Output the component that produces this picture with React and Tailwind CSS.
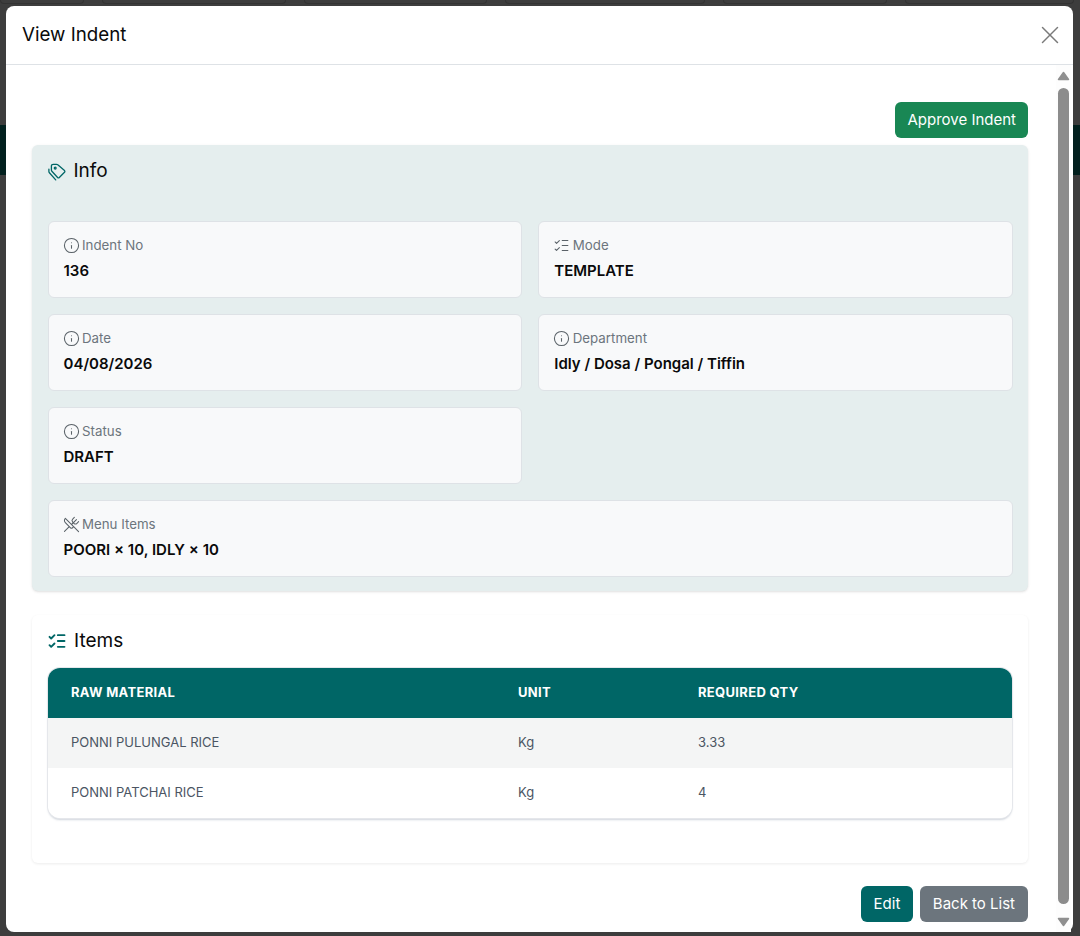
import React from 'react';
import { Info, ListChecks, UtensilsCrossed, X } from 'lucide-react';

const rows = [
  { name: 'PONNI PULUNGAL RICE', unit: 'Kg', qty: '3.33' },
  { name: 'PONNI PATCHAI RICE', unit: 'Kg', qty: '4' },
];

const tabs = ['w-[84px]', 'w-[184px]', 'w-[183px]', 'w-[200px]', 'w-[164px]', 'w-[169px]'];

function TagsIcon() {
  return (
    <svg width="18" height="18" viewBox="0 0 18 18" fill="none" stroke="#006666" strokeWidth="1.3" strokeLinecap="round" strokeLinejoin="round" className="mt-[2px] shrink-0">
      <path d="M5.200 1.300h3.300c.5 0 1 .2 1.300.5l6.700 5.800c.5.5.5 1.200 0 1.700l-5.200 5.200c-.5.5-1.200.5-1.700 0L3.900 8.200c-.3-.3-.5-.8-.5-1.300V3.100c0-1 .8-1.800 1.800-1.800z" />
      <path d="M.9 6.200v2.300c0 .5.2 1 .5 1.300l6.300 7.100" />
      <circle cx="7.200" cy="5.100" r=".9" />
    </svg>
  );
}

function Field({ icon: Icon, label, value, className = '' }) {
  return (
    <div className={`h-[77px] bg-[#f8f9fa] border border-[#dee2e6] rounded-md pt-[14px] px-[15px] ${className}`}>
      <div className="flex items-center gap-[2.5px] h-[18px] text-[13.3px] leading-[18px] text-[#6c757d]">
        <Icon size={17} strokeWidth={1.5} className="-ml-px text-[#5a6268]" />
        <span>{label}</span>
      </div>
      <div className="mt-[6px] text-[15px] leading-[22px] font-semibold text-[#0a0a0a]">{value}</div>
    </div>
  );
}

function App() {
  return (
    <div className="relative h-[936px] w-[1080px] overflow-hidden bg-[#3d3d3d] font-['Inter',sans-serif]">
      {/* page behind the backdrop */}
      <div className="flex h-[4px] gap-[18px]">
        {tabs.map((w, i) => (
          <div key={i} className={`${w} rounded-b-sm border border-t-0 border-[#333333]`}></div>
        ))}
      </div>
      <div className="mt-[121px] h-[50px] bg-[#02201e]"></div>

      <div className="absolute left-[6px] top-[6px] flex h-[926px] w-[1067px] flex-col rounded-lg bg-white">
        <div className="flex h-[59px] shrink-0 items-center justify-between border-b border-[#dee2e6] pl-4 pr-[8px]">
          <h1 className="text-[18.75px] font-normal text-[#0a0a0a]">View Indent</h1>
          <X size={30} strokeWidth={1.2} className="text-[#7a7a7a]" />
        </div>

        <div className="flex min-h-0 flex-1">
          <div className="min-w-0 flex-1 pl-[26px] pr-[28px]">
            <div className="mt-[37px] flex justify-end">
              <button className="h-9 rounded-md bg-[#198754] px-3 text-[15px] text-white">Approve Indent</button>
            </div>

            <section className="mt-[7px] rounded-md bg-[#e5eeee] pb-[14px] pl-[15.5px] pr-[15px] pt-4 shadow-sm">
              <div className="flex h-[43px] items-start gap-2">
                <TagsIcon />
                <h2 className="text-[19px] leading-[20px] text-[#0a0a0a]">Info</h2>
              </div>
              <div className="mt-[17px] grid grid-cols-2 gap-4">
                <Field icon={Info} label="Indent No" value="136" />
                <Field icon={ListChecks} label="Mode" value="TEMPLATE" />
                <Field icon={Info} label="Date" value="04/08/2026" />
                <Field icon={Info} label="Department" value="Idly / Dosa / Pongal / Tiffin" />
                <Field icon={Info} label="Status" value="DRAFT" />
                <div></div>
                <Field icon={UtensilsCrossed} label="Menu Items" value="POORI × 10, IDLY × 10" className="col-span-2" />
              </div>
            </section>

            <section className="mt-[24px] h-[248px] rounded-md bg-white px-4 pt-[13px] shadow-[0_1px_3px_rgba(0,0,0,0.08)]">
              <div className="flex h-[26px] items-center gap-[7px]">
                <ListChecks size={20} strokeWidth={2.25} className="-ml-px text-[#006666]" />
                <h2 className="text-[19px] text-[#0a0a0a]">Items</h2>
              </div>
              <div className="mt-[14px] overflow-hidden rounded-xl shadow-[0_0_0_1px_#e5e7eb,0_2px_2px_rgba(100,116,139,0.3)]">
                <table className="w-full table-fixed text-left">
                  <thead>
                    <tr className="h-[50px] bg-[#006666] text-[13px] font-bold tracking-wide text-white">
                      <th className="w-[470px] pl-[23px]">RAW MATERIAL</th>
                      <th className="w-[180px]">UNIT</th>
                      <th>REQUIRED QTY</th>
                    </tr>
                  </thead>
                  <tbody className="text-[13px] text-[#4b5563]">
                    {rows.map((row, i) => (
                      <tr key={row.name} className={`h-[50px] ${i === 0 ? 'bg-[#f4f5f5]' : 'bg-white'}`}>
                        <td className="pl-[23px]">{row.name}</td>
                        <td>{row.unit}</td>
                        <td>{row.qty}</td>
                      </tr>
                    ))}
                  </tbody>
                </table>
              </div>
            </section>

            <div className="mt-[23px] flex justify-end gap-[7px]">
              <button className="h-9 rounded-md bg-[#006666] px-[12.5px] text-[15px] text-white">Edit</button>
              <button className="h-9 rounded-md bg-[#6c757d] px-[13px] text-[15px] text-white">Back to List</button>
            </div>
          </div>

          {/* scrollbar */}
          <div className="mr-[2px] flex w-[15px] shrink-0 flex-col items-center bg-[#fdfdfd] pt-[6px]">
            <svg width="13" height="10" viewBox="0 0 13 10"><path d="M6.500 1.500 L11.500 8.500 H1.500 Z" fill="#8f8f8f" stroke="#8f8f8f" strokeWidth="1.500" strokeLinejoin="round" /></svg>
            <div className="mt-[7px] h-[816px] w-[11px] rounded-md bg-[#8c8c8c]"></div>
            <svg className="mt-[13px]" width="13" height="10" viewBox="0 0 13 10"><path d="M6.500 8.500 L11.500 1.500 H1.500 Z" fill="#8f8f8f" stroke="#8f8f8f" strokeWidth="1.500" strokeLinejoin="round" /></svg>
          </div>
        </div>
      </div>
    </div>
  );
}

export default App;
